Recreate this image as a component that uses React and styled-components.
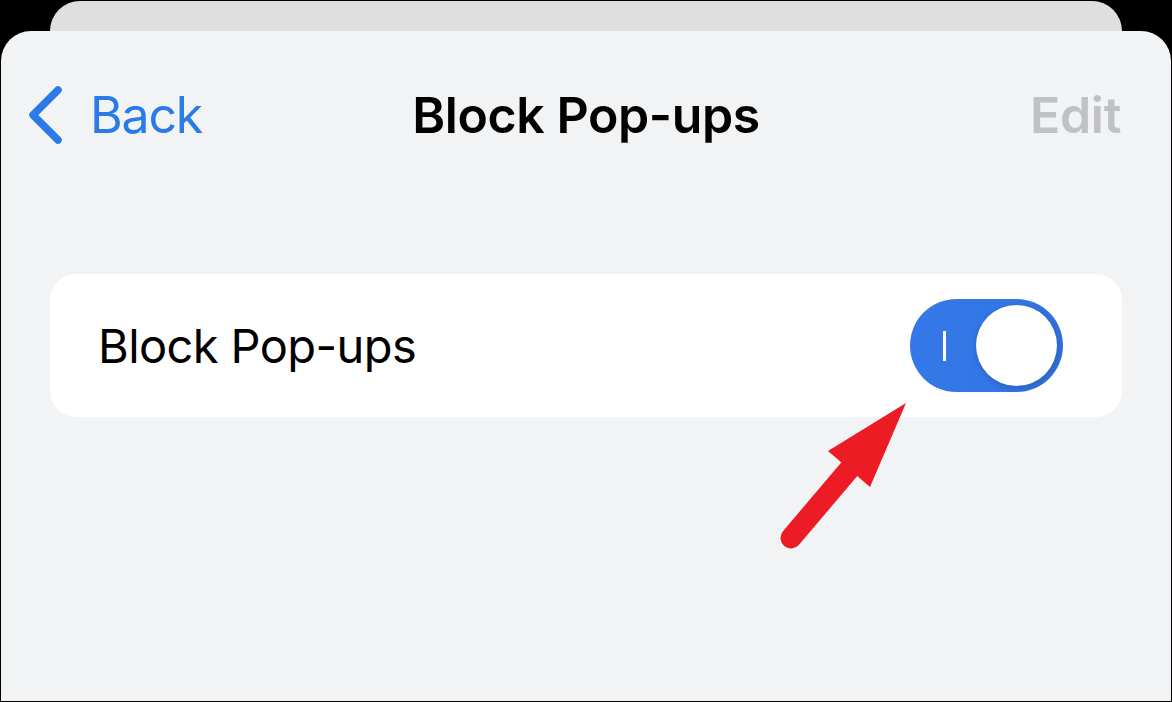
import React from "react";
import styled, { createGlobalStyle } from "styled-components";

const Global = createGlobalStyle`
  html, body { margin: 0; padding: 0; background: #000; }
  body { font-family: Inter, "Noto Sans", "Liberation Sans", sans-serif; }
  * { box-sizing: border-box; }
`;

const Frame = styled.div`
  position: relative;
  width: 1172px;
  height: 702px;
  background: #000;
  padding: 1px 1px 1px 1px;
  display: flex;
  flex-direction: column;
  overflow: hidden;
`;

const BackCard = styled.div`
  height: 30px;
  margin: 0 49px;
  background: #dfdfdf;
  border-radius: 30px 30px 0 0;
  flex-shrink: 0;
`;

const Sheet = styled.div`
  flex: 1;
  background: #f2f3f5;
  border-radius: 30px 30px 0 0;
  display: flex;
  flex-direction: column;
  padding-top: 59px;
`;

const NavBar = styled.div`
  position: relative;
  height: 50px;
  display: flex;
  align-items: center;
  justify-content: space-between;
  padding: 0 50px 0 28px;
`;

const BackButton = styled.div`
  display: flex;
  align-items: center;
  gap: 25px;
  color: #2a7ae8;
  font-size: 50px;
  line-height: 50px;
  font-weight: 400;
  letter-spacing: -1.2px;
`;

const Title = styled.div`
  position: absolute;
  left: 0;
  right: 0;
  text-align: center;
  font-size: 50px;
  line-height: 50px;
  font-weight: 600;
  color: #000;
  letter-spacing: -0.4px;
  pointer-events: none;
`;

const EditButton = styled.div`
  font-size: 50px;
  line-height: 50px;
  font-weight: 600;
  color: #c0c1c3;
  letter-spacing: -0.3px;
`;

const Group = styled.div`
  margin: 134px 49px 0;
  height: 143px;
  background: #fff;
  border-radius: 26px;
  display: flex;
  align-items: center;
  justify-content: space-between;
  padding: 0 59px 0 48px;
`;

const RowLabel = styled.div`
  font-size: 47px;
  font-weight: 400;
  color: #000;
  letter-spacing: -0.6px;
`;

const Track = styled.div`
  width: 153px;
  height: 93px;
  border-radius: 47px;
  background: linear-gradient(100deg, #3479e7 0%, #3377e6 55%, #2f6fd9 100%);
  display: flex;
  align-items: center;
  justify-content: space-between;
  padding: 0 6px 0 33px;
`;

const OnMark = styled.div`
  width: 3px;
  height: 30px;
  background: #fff;
`;

const Knob = styled.div`
  width: 81px;
  height: 81px;
  border-radius: 50%;
  background: #fff;
  box-shadow: 0 2px 6px rgba(0, 0, 0, 0.18), 0 0 1px rgba(0, 0, 0, 0.1);
`;

const Overlay = styled.svg`
  position: absolute;
  left: 0;
  top: 0;
  pointer-events: none;
`;

export default function App() {
  return (
    <>
      <Global />
      <Frame>
        <BackCard />
        <Sheet>
          <NavBar>
            <BackButton>
              <svg width="36" height="58" viewBox="0 0 36 58">
                <polyline
                  points="29,4 4,29 29,54"
                  fill="none"
                  stroke="#2a7ae8"
                  strokeWidth="7.5"
                  strokeLinecap="round"
                  strokeLinejoin="round"
                />
              </svg>
              <span>Back</span>
            </BackButton>
            <Title>Block Pop-ups</Title>
            <EditButton>Edit</EditButton>
          </NavBar>
          <Group>
            <RowLabel>Block Pop-ups</RowLabel>
            <Track>
              <OnMark />
              <Knob />
            </Track>
          </Group>
        </Sheet>
        <Overlay width="1172" height="702" viewBox="0 0 1172 702">
          <line
            x1="791"
            y1="538"
            x2="852"
            y2="466"
            stroke="#ed1c24"
            strokeWidth="21"
            strokeLinecap="round"
          />
          <polygon points="906,403 828,451 870,487" fill="#ed1c24" />
        </Overlay>
      </Frame>
    </>
  );
}
